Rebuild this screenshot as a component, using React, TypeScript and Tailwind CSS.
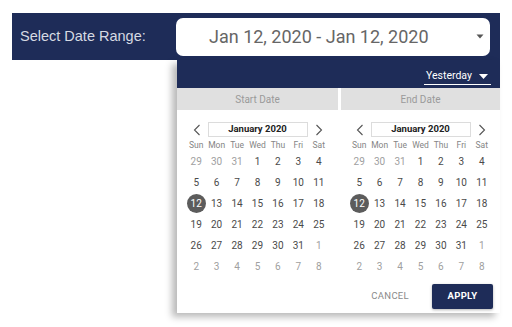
import React from 'react';

const NAVY = 'bg-[#1e2c58]';

const weekdays = ['Sun', 'Mon', 'Tue', 'Wed', 'Thu', 'Fri', 'Sat'];

// January 2020 grid, false = outside the month
const weeks: [number, boolean][][] = [
  [[29, false], [30, false], [31, false], [1, true], [2, true], [3, true], [4, true]],
  [[5, true], [6, true], [7, true], [8, true], [9, true], [10, true], [11, true]],
  [[12, true], [13, true], [14, true], [15, true], [16, true], [17, true], [18, true]],
  [[19, true], [20, true], [21, true], [22, true], [23, true], [24, true], [25, true]],
  [[26, true], [27, true], [28, true], [29, true], [30, true], [31, true], [1, false]],
  [[2, false], [3, false], [4, false], [5, false], [6, false], [7, false], [8, false]],
];

const Chevron: React.FC<{ dir: 'left' | 'right' }> = ({ dir }) => (
  <svg width="14" height="12" viewBox="0 0 14 12" className="shrink-0">
    <path
      d={dir === 'left' ? 'M9.5 1 L4.5 6 L9.5 11' : 'M4.5 1 L9.5 6 L4.5 11'}
      fill="none"
      stroke="#555"
      strokeWidth="1.1"
    />
  </svg>
);

const Calendar: React.FC = () => {
  return (
    <div className="pt-[12px] flex flex-col items-center">
      {/* month navigation */}
      <div className="h-[15px] flex items-center gap-[4px]">
        <Chevron dir="left" />
        <div className="w-[100px] h-[15px] border border-[#dcdcdc] flex items-center justify-center text-[9.5px] font-bold text-[#222]">
          January 2020
        </div>
        <Chevron dir="right" />
      </div>

      <div className="w-[143px] mt-[2px]">
        <div className="grid grid-cols-7 h-[12px] items-center">
          {weekdays.map((d) => (
            <span key={d} className="text-center text-[8.5px] text-[#858585]">
              {d}
            </span>
          ))}
        </div>
        {weeks.map((week, i) => (
          <div key={i} className="grid grid-cols-7 h-[21px] items-center">
            {week.map(([day, inMonth], j) => {
              const selected = inMonth && day === 12;
              return (
                <div key={j} className="flex items-center justify-center">
                  {selected ? (
                    <span className="w-[19px] h-[19px] rounded-full bg-[#5c5c5c] text-white text-[10px] flex items-center justify-center">
                      {day}
                    </span>
                  ) : (
                    <span className={`text-[10px] ${inMonth ? 'text-[#4a4a4a]' : 'text-[#a0a0a0]'}`}>
                      {day}
                    </span>
                  )}
                </div>
              );
            })}
          </div>
        ))}
      </div>
    </div>
  );
};

export default function App() {
  return (
    <div
      className="w-[512px] h-[327px] bg-white pt-[13px] pl-[12px] overflow-hidden"
      style={{ fontFamily: 'Roboto, "Liberation Sans", sans-serif' }}
    >
      {/* top bar */}
      <div className={`w-[488px] h-[47px] ${NAVY} flex items-center`}>
        <div className="w-[164px] pl-[8px] text-[14.5px] text-[#d6dae3] font-['Liberation_Sans',Arial,sans-serif]">
          Select Date Range:
        </div>
        <div className="w-[314px] h-[38px] bg-white rounded-[7px] flex items-center pl-[33px] pr-[6px]">
          <span className="flex-1 text-[18px] text-[#666]">Jan 12, 2020 - Jan 12, 2020</span>
          <svg width="8" height="5" viewBox="0 0 8 5">
            <path d="M0.5 0.5 L7.5 0.5 L4 4.5 Z" fill="#555" />
          </svg>
        </div>
      </div>

      {/* dropdown panel */}
      <div className="ml-[165px] w-[323px] h-[253px] bg-white flex flex-col shadow-[-5px_4px_7px_rgba(0,0,0,0.28)]">
        <div className={`h-[28px] ${NAVY} flex items-end justify-end pr-[9px] pb-[3px]`}>
          <div className="w-[67px] h-[17px] border-b border-white flex items-center justify-between pl-[2px] pr-[3px]">
            <span className="text-[10.5px] text-white">Yesterday</span>
            <svg width="9" height="5" viewBox="0 0 9 5">
              <path d="M0 0 L9 0 L4.5 5 Z" fill="#fff" />
            </svg>
          </div>
        </div>

        <div className="grid grid-cols-[161px_159px] gap-x-[3px]">
          <div className="h-[22px] bg-[#e0e0e0] flex items-center justify-center text-[10px] text-[#9a9a9a]">
            Start Date
          </div>
          <div className="h-[22px] bg-[#e0e0e0] flex items-center justify-center text-[10px] text-[#9a9a9a]">
            End Date
          </div>
          <Calendar />
          <Calendar />
        </div>

        <div className="mt-[7px] flex items-center justify-end pr-[7px]">
          <span className="mr-[23px] text-[9.5px] tracking-[0.3px] text-[#8a8a8a]">CANCEL</span>
          <button className={`w-[61px] h-[25px] ${NAVY} text-white text-[9.5px] font-bold tracking-[0.3px] shadow-[0_1px_3px_rgba(0,0,0,0.3)] rounded-[2px]`}>
            APPLY
          </button>
        </div>
      </div>
    </div>
  );
}
